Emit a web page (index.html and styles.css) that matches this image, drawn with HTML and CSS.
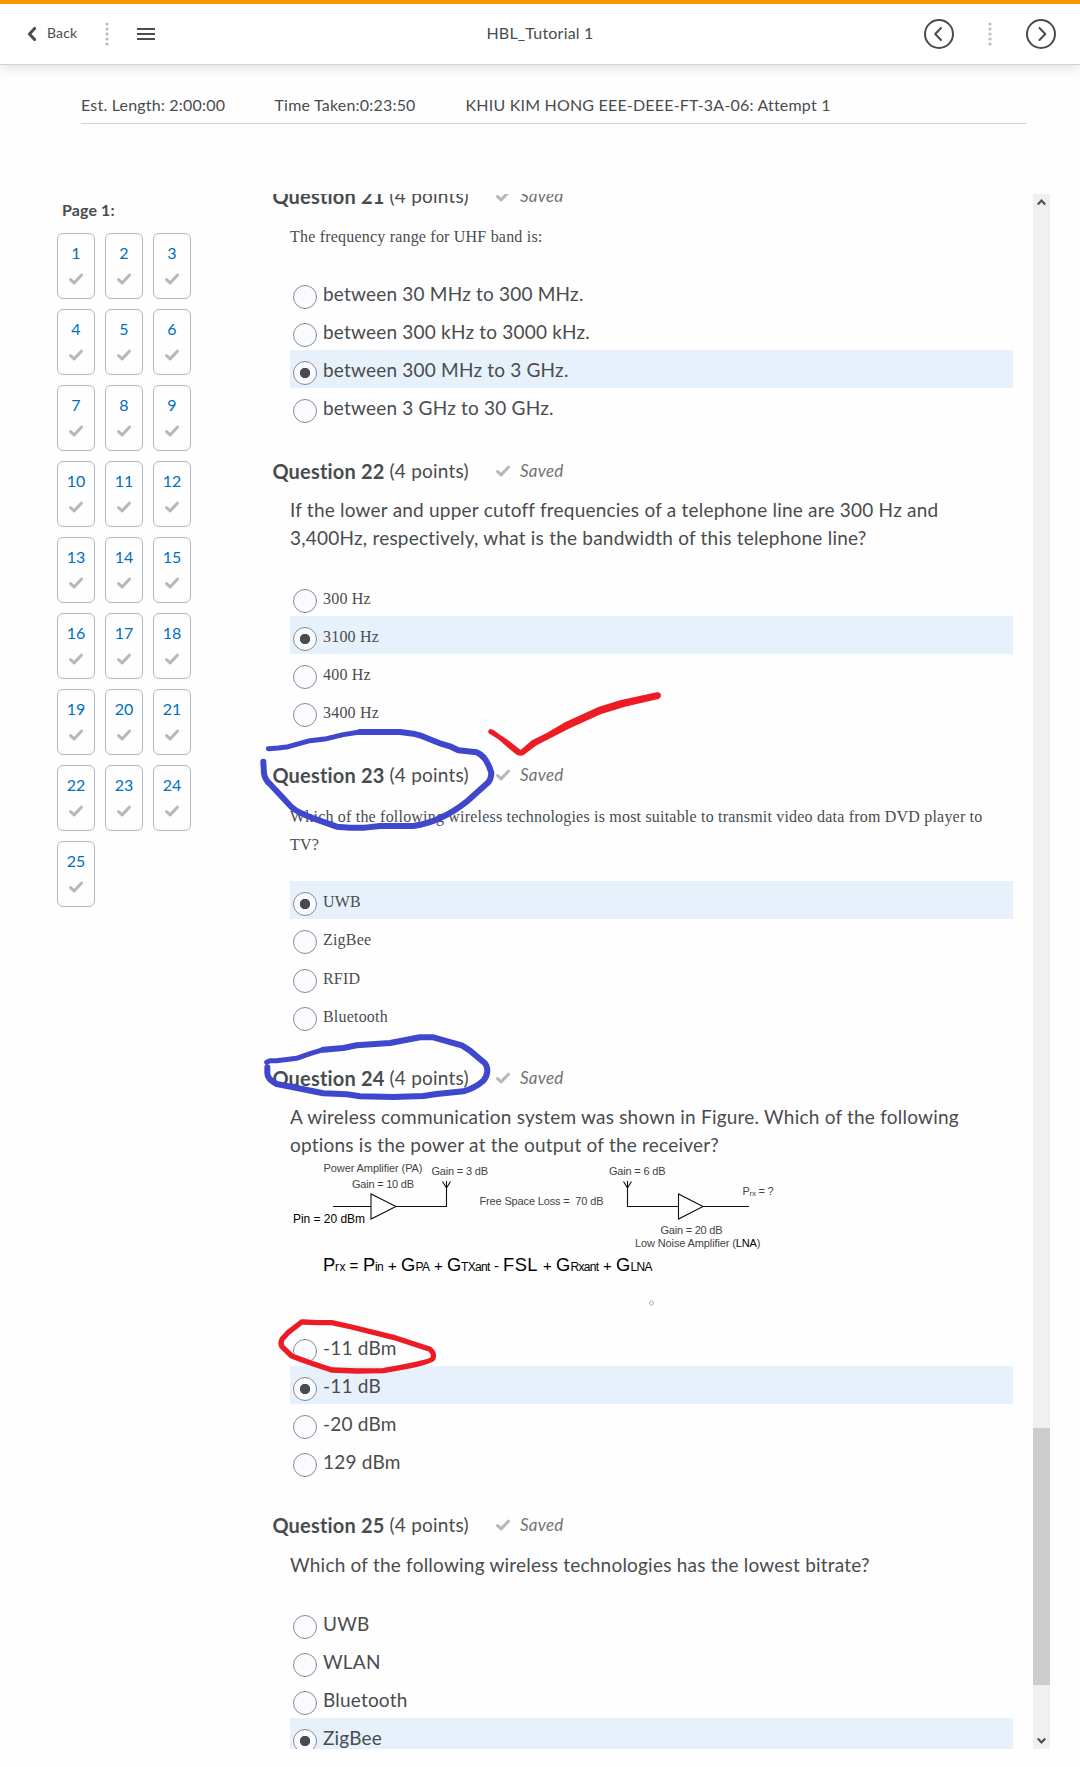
FILE: index.html
```html
<!DOCTYPE html>
<html lang="en">
<head>
<meta charset="utf-8">
<title>HBL_Tutorial 1</title>
<link rel="stylesheet" href="styles.css">
</head>
<body>
<svg class="defs" aria-hidden="true">
  <symbol id="check" viewBox="0 0 14 12"><path d="M1.6 6.6 L5.1 9.9 L12.4 2.2" fill="none" stroke="currentColor" stroke-width="3" stroke-linecap="round" stroke-linejoin="round"/></symbol>
  <symbol id="dots" viewBox="0 0 4 24"><g fill="#b7bec4"><circle cx="2" cy="2" r="1.6"/><circle cx="2" cy="7" r="1.6"/><circle cx="2" cy="12" r="1.6"/><circle cx="2" cy="17" r="1.6"/><circle cx="2" cy="22" r="1.6"/></g></symbol>
</svg>

<header class="topbar">
  <div class="side">
    <a class="back"><svg width="10" height="16" viewBox="0 0 10 16"><path d="M7.6 2.4 L2.4 8 L7.6 13.6" fill="none" stroke="#494c4e" stroke-width="3" stroke-linecap="round" stroke-linejoin="round"/></svg><span>Back</span></a>
    <svg class="dots" width="4" height="24"><use href="#dots"/></svg>
    <svg class="menu" width="18" height="12" viewBox="0 0 18 12"><path d="M0 1H18M0 6H18M0 11H18" stroke="#494c4e" stroke-width="2"/></svg>
  </div>
  <h1>HBL_Tutorial 1</h1>
  <div class="side right">
    <svg width="30" height="30" viewBox="0 0 30 30"><circle cx="15" cy="15" r="14" fill="none" stroke="#494c4e" stroke-width="2"/><path d="M17 9 L11.2 15 L17 21" fill="none" stroke="#494c4e" stroke-width="2" stroke-linecap="round" stroke-linejoin="round"/></svg>
    <svg width="4" height="24"><use href="#dots"/></svg>
    <svg width="30" height="30" viewBox="0 0 30 30"><circle cx="15" cy="15" r="14" fill="none" stroke="#494c4e" stroke-width="2"/><path d="M13.5 9 L19.3 15 L13.5 21" fill="none" stroke="#494c4e" stroke-width="2" stroke-linecap="round" stroke-linejoin="round"/></svg>
  </div>
</header>

<div class="info"><span class="length">Est. Length: 2:00:00</span><span class="taken">Time Taken:0:23:50</span><span>KHIU KIM HONG EEE-DEEE-FT-3A-06: Attempt 1</span></div>

<div class="main">
  <nav class="pages">
    <h2>Page 1:</h2>
    <div class="grid">
      <a>1<svg><use href="#check"/></svg></a><a>2<svg><use href="#check"/></svg></a><a>3<svg><use href="#check"/></svg></a>
      <a>4<svg><use href="#check"/></svg></a><a>5<svg><use href="#check"/></svg></a><a>6<svg><use href="#check"/></svg></a>
      <a>7<svg><use href="#check"/></svg></a><a>8<svg><use href="#check"/></svg></a><a>9<svg><use href="#check"/></svg></a>
      <a>10<svg><use href="#check"/></svg></a><a>11<svg><use href="#check"/></svg></a><a>12<svg><use href="#check"/></svg></a>
      <a>13<svg><use href="#check"/></svg></a><a>14<svg><use href="#check"/></svg></a><a>15<svg><use href="#check"/></svg></a>
      <a>16<svg><use href="#check"/></svg></a><a>17<svg><use href="#check"/></svg></a><a>18<svg><use href="#check"/></svg></a>
      <a>19<svg><use href="#check"/></svg></a><a>20<svg><use href="#check"/></svg></a><a>21<svg><use href="#check"/></svg></a>
      <a>22<svg><use href="#check"/></svg></a><a>23<svg><use href="#check"/></svg></a><a>24<svg><use href="#check"/></svg></a>
      <a>25<svg><use href="#check"/></svg></a>
    </div>
  </nav>

  <main class="quiz">
    <section class="question first">
      <h3><b>Question 21</b> (4 points) <span class="saved"><svg><use href="#check"/></svg><i>Saved</i></span></h3>
      <div class="stem serif">The frequency range for UHF band is:</div>
      <ul>
        <li><span class="radio"></span>between 30 MHz to 300 MHz.</li>
        <li><span class="radio"></span>between 300 kHz to 3000 kHz.</li>
        <li class="on"><span class="radio"></span>between 300 MHz to 3 GHz.</li>
        <li><span class="radio"></span>between 3 GHz to 30 GHz.</li>
      </ul>
    </section>

    <section class="question">
      <h3><b>Question 22</b> (4 points) <span class="saved"><svg><use href="#check"/></svg><i>Saved</i></span></h3>
      <div class="stem two-line">If the lower and upper cutoff frequencies of a telephone line are 300 Hz and<br>3,400Hz, respectively, what is the bandwidth of this telephone line?</div>
      <ul class="serif">
        <li><span class="radio"></span>300 Hz</li>
        <li class="on"><span class="radio"></span>3100 Hz</li>
        <li><span class="radio"></span>400 Hz</li>
        <li><span class="radio"></span>3400 Hz</li>
      </ul>
    </section>

    <section class="question">
      <h3><b>Question 23</b> (4 points) <span class="saved"><svg><use href="#check"/></svg><i>Saved</i></span></h3>
      <div class="stem serif">Which of the following wireless technologies is most suitable to transmit video data from DVD player to<br>TV?</div>
      <ul class="serif">
        <li class="on"><span class="radio"></span>UWB</li>
        <li><span class="radio"></span>ZigBee</li>
        <li><span class="radio"></span>RFID</li>
        <li><span class="radio"></span>Bluetooth</li>
      </ul>
    </section>

    <section class="question">
      <h3><b>Question 24</b> (4 points) <span class="saved"><svg><use href="#check"/></svg><i>Saved</i></span></h3>
      <div class="stem with-figure">A wireless communication system was shown in Figure. Which of the following<br>options is the power at the output of the receiver?
        <svg class="figure" width="500" height="150" viewBox="290 1160 500 150">
          <g fill="none" stroke="#111" stroke-width="1.1">
            <path d="M333 1206.5H371M371 1194V1219L396 1206.5ZM396 1206.5H446.5V1181M442.5 1181.5L446.5 1188L450.5 1181.5"/>
            <path d="M749 1206.5H703M678.5 1194V1219L703 1206.5ZM678.5 1206.5H627.5V1181M623.5 1181.5L627.5 1188L631.5 1181.5"/>
          </g>
          <g class="label">
            <text x="323.5" y="1171.7" textLength="99">Power Amplifier (PA)</text>
            <text x="352" y="1188" textLength="62">Gain = 10 dB</text>
            <text x="431.5" y="1175" textLength="56.5">Gain = 3 dB</text>
            <text x="609" y="1175" textLength="56.5">Gain = 6 dB</text>
            <text x="479.5" y="1205.4" textLength="124" xml:space="preserve">Free Space Loss =  70 dB</text>
            <text x="742.5" y="1195" textLength="31">P<tspan font-size="8" dy="1">rx</tspan><tspan dy="-1"> = ?</tspan></text>
            <text x="660.5" y="1234" textLength="62">Gain = 20 dB</text>
            <text x="635" y="1247" textLength="125.5">Low Noise Amplifier (<tspan fill="#000">LNA</tspan>)</text>
          </g>
          <text class="pin" x="293" y="1222.7" textLength="72">Pin = 20 dBm</text>
          <g class="formula">
            <text x="323" y="1270.6">P<tspan class="sub wide" x="335">rx</tspan><tspan class="op" x="349.5">=</tspan><tspan x="363">P</tspan><tspan class="sub" x="375">in</tspan><tspan class="op" x="388">+</tspan><tspan x="401">G</tspan><tspan class="sub" x="415.5">PA</tspan><tspan class="op" x="434">+</tspan><tspan x="447">G</tspan><tspan class="sub" x="461">TXant</tspan><tspan class="op" x="494">-</tspan><tspan x="503" letter-spacing=".5">FSL</tspan><tspan class="op" x="543">+</tspan><tspan x="556">G</tspan><tspan class="sub" x="570.5">Rxant</tspan><tspan class="op" x="603">+</tspan><tspan x="616">G</tspan><tspan class="sub" x="630.5">LNA</tspan></text>
          </g>
          <circle cx="651.5" cy="1303" r="2" fill="none" stroke="#a9a9bd"/>
        </svg>
      </div>
      <ul>
        <li><span class="radio"></span>-11 dBm</li>
        <li class="on"><span class="radio"></span>-11 dB</li>
        <li><span class="radio"></span>-20 dBm</li>
        <li><span class="radio"></span>129 dBm</li>
      </ul>
    </section>

    <section class="question">
      <h3><b>Question 25</b> (4 points) <span class="saved"><svg><use href="#check"/></svg><i>Saved</i></span></h3>
      <div class="stem">Which of the following wireless technologies has the lowest bitrate?</div>
      <ul>
        <li><span class="radio"></span>UWB</li>
        <li><span class="radio"></span>WLAN</li>
        <li><span class="radio"></span>Bluetooth</li>
        <li class="on"><span class="radio"></span>ZigBee</li>
      </ul>
    </section>
  </main>

  <div class="scrollbar">
    <svg width="17" height="17" viewBox="0 0 17 17"><path d="M4.8 10.4L8.5 6.6L12.2 10.4" fill="none" stroke="#505050" stroke-width="2.2"/></svg>
    <div class="thumb"></div>
    <svg width="17" height="17" viewBox="0 0 17 17"><path d="M4.8 6.6L8.5 10.4L12.2 6.6" fill="none" stroke="#505050" stroke-width="2.2"/></svg>
  </div>
</div>

<svg class="ink" width="1080" height="1767" viewBox="0 0 1080 1767" aria-hidden="true">
  <g fill="none" stroke="#3f48cc" stroke-width="18" stroke-linecap="round" stroke-linejoin="round">
    <g transform="translate(250 560) scale(.3333)">
      <path stroke-width="15" d="M55 566L85 564L115 560L150 550L180 542L230 536L280 524L330 516"/>
      <path d="M330 516H450L490 521L515 528L575 552L600 559L625 571L680 577Q694 582 705 597Q716 612 724 638Q724 656 715 667L650 725C610 757 560 788 490 798H390L345 803H300L260 800L190 775C160 764 140 755 125 742L60 672Q44 658 42 640L40 605"/>
    </g>
    <g transform="translate(250 840) scale(.3333)">
      <path stroke-width="15" d="M50 667L60 662H80L140 655L180 641L220 629"/>
      <path d="M220 629L280 624L320 616L420 609L510 592H550L635 616L660 632L705 670Q713 680 712 695Q710 712 700 722Q675 744 640 754L560 762L520 768L430 771L330 769L290 763L220 760L130 742L80 732Q52 718 52 700V682"/>
    </g>
  </g>
  <path fill="#ed1c24" transform="translate(250 560) scale(.3333)" d="M716 520Q712 508 722 507L732 511L750 524L775 541L812 570L846 541L890 519L945 487L1045 441L1110 421L1220 397Q1232 396 1233 406Q1232 416 1222 418L1125 440L1052 463L955 507L860 556L822 584Q812 590 800 584L775 564L745 538Z"/>
  <path fill="none" stroke="#ed1c24" stroke-width="16" stroke-linejoin="round" transform="translate(260 1300) scale(.3333)" d="M130 66L170 68H215L275 81L400 112L510 148Q524 160 519 175Q515 184 440 199L370 212L290 213L215 210L150 188L95 168L66 140Q60 130 66 118L85 97L125 66Z"/>
</svg>
</body>
</html>
```
FILE: styles.css
```css
* { box-sizing: border-box; }
body {
  margin: 0;
  height: 1767px;
  overflow: hidden;
  position: relative;
  background: #fefefe;
  color: #494c4e;
  font: 400 16px/20px Lato, sans-serif;
  letter-spacing: .2px;
}
svg { display: block; flex: none; }
.defs { position: absolute; width: 0; height: 0; }

.topbar {
  height: 65px;
  border-top: 4px solid #f79400;
  border-bottom: 1px solid #d0d2d4;
  box-shadow: 0 3px 12px rgba(0, 0, 0, .12);
  background: #fff;
  display: flex;
  align-items: center;
  padding: 0 24px 0 27px;
}
.topbar h1 { margin: 0 3px 0 0; padding-bottom: 2px; font-size: 16px; font-weight: 400; letter-spacing: .2px; }
.side { flex: 1; display: flex; align-items: center; }
.side.right { justify-content: flex-end; gap: 34px; }
.back { display: flex; align-items: center; gap: 10px; font-size: 14px; letter-spacing: .15px; width: 78px; }
.back span { padding-bottom: 2px; }
.menu { margin-left: 28px; }

.info {
  margin: 29px 54px 0 81px;
  height: 30px;
  padding-top: 1px;
  border-bottom: 1px solid #cdd5dc;
  display: flex;
  line-height: 20px;
}
.length { width: 193.5px; }
.taken { width: 191px; }

.main { margin-top: 70px; height: 1555px; display: flex; }
.pages { width: 272px; padding: 6px 0 0 57px; }
.pages h2 { margin: 0 0 13px 5px; font-size: 16px; line-height: 20px; letter-spacing: .1px; }
.grid { display: grid; grid-template-columns: repeat(3, 38px); gap: 10px; letter-spacing: 0; }
.grid a {
  height: 66px;
  border: 1px solid #b1b9be;
  border-radius: 6px;
  color: #006fbf;
  display: flex;
  flex-direction: column;
  align-items: center;
  padding-top: 9px;
  gap: 10px;
}
.grid svg { width: 14px; height: 12px; color: #b1b9be; }

.quiz { width: 761px; overflow: hidden; padding-right: 20px; }
.question { margin-bottom: 32.4px; }
.question.first { margin-top: -10px; }
h3 { margin: 0; padding: 0 0 4px .4px; font-size: 19px; font-weight: 400; line-height: 24px; height: 28px; display: flex; align-items: center; white-space: pre; }
h3 b { font-size: 20px; letter-spacing: .18px; }
.saved { display: flex; align-items: center; gap: 10px; margin-left: 22.3px; color: #6e7376; font-size: 17px; }
.saved svg { width: 14px; height: 12px; color: #b1b9be; }
.stem { margin: 10px 0 25px 18px; font-size: 19px; line-height: 28px; letter-spacing: .215px; white-space: nowrap; }
.stem.two-line { margin-top: 9px; margin-bottom: 26px; }
.serif { font-family: "Liberation Serif", serif; font-size: 16px; letter-spacing: .2px; }
.stem.serif { padding-top: 2px; margin-bottom: 22.4px; }
.question.first .stem.serif { padding-top: 1px; margin-bottom: 23px; }
.stem.with-figure { margin-top: 9px; margin-bottom: 17.5px; }
.figure { margin-top: 1px; font-family: "Liberation Sans", sans-serif; letter-spacing: 0; }
.label { font-size: 11px; fill: #444; }
.pin { font-size: 12px; fill: #000; }
.formula { font-size: 18.3px; fill: #000; }
.sub { font-size: 12px; letter-spacing: -.7px; }
.sub.wide { letter-spacing: .6px; }
.op { font-size: 15px; }

ul { list-style: none; margin: 0 0 0 18px; padding: 0; font-size: 19px; }
li { height: 38.15px; display: flex; align-items: flex-start; gap: 6px; padding: 8px 0 0 3px; line-height: 24px; }
.serif li { padding-top: 9px; }
li.on { background: #e7f1fb; }
.radio { width: 24px; height: 24px; margin-top: 3px; border: 1px solid #868b8f; border-radius: 50%; background: #f9fbff; flex: none; }
.serif .radio { margin-top: 2px; }
.on .radio { background: radial-gradient(circle, #494c4e 4.8px, #f9fbff 5.5px); }

.scrollbar { width: 17px; background: #f0f0f0; display: flex; flex-direction: column; justify-content: space-between; }
.thumb { height: 257px; margin-top: 1170px; background: #cdcdcd; }

.ink { position: absolute; left: 0; top: 0; }
```
